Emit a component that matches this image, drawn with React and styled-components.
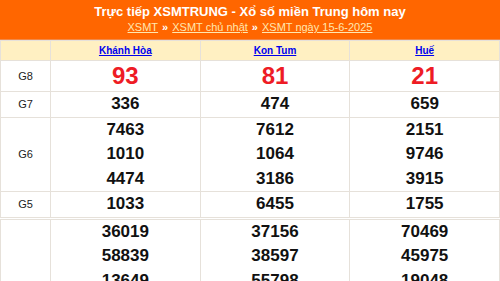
import styled, { createGlobalStyle } from 'styled-components'

const GlobalStyle = createGlobalStyle`
  html, body {
    margin: 0;
    padding: 0;
    background: #fff;
    font-family: "Liberation Sans", Arial, sans-serif;
  }
`;

const Header = styled.div`
  background: #ff6600;
  height: 40px;
  box-sizing: border-box;
  padding-top: 4px;
  text-align: center;
  color: #fff;
  border-bottom: 1px solid #f08848;
`;

const Title = styled.h2`
  margin: 0;
  font-size: 13px;
  font-weight: bold;
  line-height: 16px;
`;

const Crumbs = styled.div`
  font-size: 11px;
  line-height: 15px;
  font-weight: bold;

  a {
    color: #ffe7b0;
    font-weight: normal;
    text-decoration: underline;
  }

  span {
    margin: 0 4px;
  }
`;

const Table = styled.table`
  width: 100%;
  border-collapse: collapse;
  table-layout: fixed;

  td, th {
    border: 1px solid #e6e1da;
    text-align: center;
    padding: 0;
  }
`;

const HeadRow = styled.tr`
  background: #fff0c2;
  height: 20px;

  th {
    font-size: 10px;
    font-weight: bold;
  }

  a {
    color: #0000ee;
  }
`;

const Label = styled.td`
  font-size: 11px;
  color: #222;
`;

const Prize = styled.td`
  font-size: ${p => (p.$big ? '24px' : '17px')};
  font-weight: bold;
  color: ${p => (p.$big ? '#ee1c25' : '#111')};
  line-height: ${p => (p.$big ? '30px' : '24.5px')};
`;

const Row = styled.tr`
  border-top: ${p => (p.$thick ? '3px double #e6e1da' : 'none')};
`;

const provinces = ['Khánh Hòa', 'Kon Tum', 'Huế'];

const rows = [
  { label: 'G8', big: true, values: [['93'], ['81'], ['21']] },
  { label: 'G7', values: [['336'], ['474'], ['659']] },
  {
    label: 'G6',
    values: [
      ['7463', '1010', '4474'],
      ['7612', '1064', '3186'],
      ['2151', '9746', '3915'],
    ],
  },
  { label: 'G5', values: [['1033'], ['6455'], ['1755']] },
  {
    label: 'G4',
    thick: true,
    values: [
      ['36019', '58839', '13649', '22717', '05130', '62951', '41208'],
      ['37156', '38597', '55798', '21035', '76394', '45201', '90865'],
      ['70469', '45975', '19048', '63510', '82716', '07492', '34581'],
    ],
  },
];

function App() {
  return (
    <>
      <GlobalStyle />
      <Header>
        <Title>Trực tiếp XSMTRUNG - Xổ số miền Trung hôm nay</Title>
        <Crumbs>
          <a href="#">XSMT</a>
          <span>»</span>
          <a href="#">XSMT chủ nhật</a>
          <span>»</span>
          <a href="#">XSMT ngày 15-6-2025</a>
        </Crumbs>
      </Header>
      <Table>
        <colgroup>
          <col style={{ width: '50px' }} />
          <col />
          <col />
          <col />
        </colgroup>
        <tbody>
          <HeadRow>
            <th></th>
            {provinces.map(p => (
              <th key={p}>
                <a href="#">{p}</a>
              </th>
            ))}
          </HeadRow>
          {rows.map(r => (
            <Row key={r.label} $thick={r.thick}>
              <Label>{r.label === 'G4' ? '' : r.label}</Label>
              {r.values.map((vals, i) => (
                <Prize key={i} $big={r.big}>
                  {vals.map(v => (
                    <div key={v}>{v}</div>
                  ))}
                </Prize>
              ))}
            </Row>
          ))}
        </tbody>
      </Table>
    </>
  )
}

export default App
